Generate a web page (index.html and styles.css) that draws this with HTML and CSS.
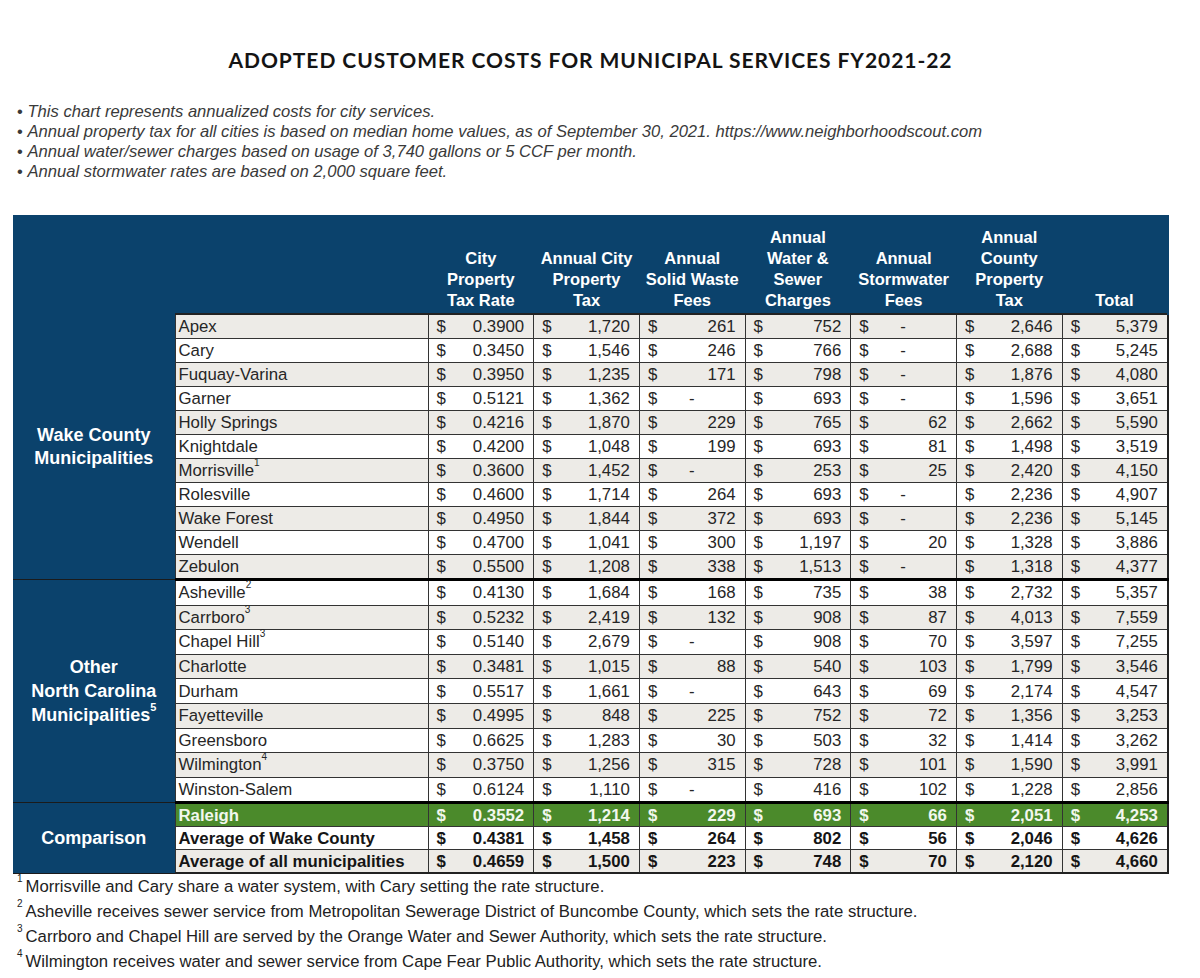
FILE: index.html
```html
<!DOCTYPE html>
<html>
<head>
<meta charset="utf-8">
<title>Adopted Customer Costs for Municipal Services FY2021-22</title>
<link rel="stylesheet" href="styles.css">
</head>
<body>
<div class="page">
  <h1 class="title">ADOPTED CUSTOMER COSTS FOR MUNICIPAL SERVICES FY2021-22</h1>
  <ul class="notes">
    <li>This chart represents annualized costs for city services.</li>
    <li>Annual property tax for all cities is based on median home values, as of September 30, 2021. https://www.neighborhoodscout.com</li>
    <li>Annual water/sewer charges based on usage of 3,740 gallons or 5 CCF per month.</li>
    <li>Annual stormwater rates are based on 2,000 square feet.</li>
  </ul>
  <table class="costs">
    <colgroup><col class="c-group"><col class="c-name"><col class="c-num"><col class="c-num"><col class="c-num"><col class="c-num"><col class="c-num"><col class="c-num"><col class="c-num"></colgroup>
    <thead>
      <tr class="head">
        <th colspan="2"></th>
        <th>City<br>Property<br>Tax Rate</th>
        <th>Annual City<br>Property<br>Tax</th>
        <th>Annual<br>Solid Waste<br>Fees</th>
        <th>Annual<br>Water &amp;<br>Sewer<br>Charges</th>
        <th>Annual<br>Stormwater<br>Fees</th>
        <th>Annual<br>County<br>Property<br>Tax</th>
        <th>Total</th>
      </tr>
    </thead>
    <tbody>
      <tr class="wake alt"><th class="group g-wake" rowspan="11">Wake County<br>Municipalities</th><td class="name">Apex</td><td><div class="m"><span>$</span><span>0.3900</span></div></td><td><div class="m"><span>$</span><span>1,720</span></div></td><td><div class="m"><span>$</span><span>261</span></div></td><td><div class="m"><span>$</span><span>752</span></div></td><td><div class="m"><span>$</span><span class="dash">-</span></div></td><td><div class="m"><span>$</span><span>2,646</span></div></td><td><div class="m"><span>$</span><span>5,379</span></div></td></tr>
      <tr class="wake"><td class="name">Cary</td><td><div class="m"><span>$</span><span>0.3450</span></div></td><td><div class="m"><span>$</span><span>1,546</span></div></td><td><div class="m"><span>$</span><span>246</span></div></td><td><div class="m"><span>$</span><span>766</span></div></td><td><div class="m"><span>$</span><span class="dash">-</span></div></td><td><div class="m"><span>$</span><span>2,688</span></div></td><td><div class="m"><span>$</span><span>5,245</span></div></td></tr>
      <tr class="wake alt"><td class="name">Fuquay-Varina</td><td><div class="m"><span>$</span><span>0.3950</span></div></td><td><div class="m"><span>$</span><span>1,235</span></div></td><td><div class="m"><span>$</span><span>171</span></div></td><td><div class="m"><span>$</span><span>798</span></div></td><td><div class="m"><span>$</span><span class="dash">-</span></div></td><td><div class="m"><span>$</span><span>1,876</span></div></td><td><div class="m"><span>$</span><span>4,080</span></div></td></tr>
      <tr class="wake"><td class="name">Garner</td><td><div class="m"><span>$</span><span>0.5121</span></div></td><td><div class="m"><span>$</span><span>1,362</span></div></td><td><div class="m"><span>$</span><span class="dash">-</span></div></td><td><div class="m"><span>$</span><span>693</span></div></td><td><div class="m"><span>$</span><span class="dash">-</span></div></td><td><div class="m"><span>$</span><span>1,596</span></div></td><td><div class="m"><span>$</span><span>3,651</span></div></td></tr>
      <tr class="wake alt"><td class="name">Holly Springs</td><td><div class="m"><span>$</span><span>0.4216</span></div></td><td><div class="m"><span>$</span><span>1,870</span></div></td><td><div class="m"><span>$</span><span>229</span></div></td><td><div class="m"><span>$</span><span>765</span></div></td><td><div class="m"><span>$</span><span>62</span></div></td><td><div class="m"><span>$</span><span>2,662</span></div></td><td><div class="m"><span>$</span><span>5,590</span></div></td></tr>
      <tr class="wake"><td class="name">Knightdale</td><td><div class="m"><span>$</span><span>0.4200</span></div></td><td><div class="m"><span>$</span><span>1,048</span></div></td><td><div class="m"><span>$</span><span>199</span></div></td><td><div class="m"><span>$</span><span>693</span></div></td><td><div class="m"><span>$</span><span>81</span></div></td><td><div class="m"><span>$</span><span>1,498</span></div></td><td><div class="m"><span>$</span><span>3,519</span></div></td></tr>
      <tr class="wake alt"><td class="name">Morrisville<sup>1</sup></td><td><div class="m"><span>$</span><span>0.3600</span></div></td><td><div class="m"><span>$</span><span>1,452</span></div></td><td><div class="m"><span>$</span><span class="dash">-</span></div></td><td><div class="m"><span>$</span><span>253</span></div></td><td><div class="m"><span>$</span><span>25</span></div></td><td><div class="m"><span>$</span><span>2,420</span></div></td><td><div class="m"><span>$</span><span>4,150</span></div></td></tr>
      <tr class="wake"><td class="name">Rolesville</td><td><div class="m"><span>$</span><span>0.4600</span></div></td><td><div class="m"><span>$</span><span>1,714</span></div></td><td><div class="m"><span>$</span><span>264</span></div></td><td><div class="m"><span>$</span><span>693</span></div></td><td><div class="m"><span>$</span><span class="dash">-</span></div></td><td><div class="m"><span>$</span><span>2,236</span></div></td><td><div class="m"><span>$</span><span>4,907</span></div></td></tr>
      <tr class="wake alt"><td class="name">Wake Forest</td><td><div class="m"><span>$</span><span>0.4950</span></div></td><td><div class="m"><span>$</span><span>1,844</span></div></td><td><div class="m"><span>$</span><span>372</span></div></td><td><div class="m"><span>$</span><span>693</span></div></td><td><div class="m"><span>$</span><span class="dash">-</span></div></td><td><div class="m"><span>$</span><span>2,236</span></div></td><td><div class="m"><span>$</span><span>5,145</span></div></td></tr>
      <tr class="wake"><td class="name">Wendell</td><td><div class="m"><span>$</span><span>0.4700</span></div></td><td><div class="m"><span>$</span><span>1,041</span></div></td><td><div class="m"><span>$</span><span>300</span></div></td><td><div class="m"><span>$</span><span>1,197</span></div></td><td><div class="m"><span>$</span><span>20</span></div></td><td><div class="m"><span>$</span><span>1,328</span></div></td><td><div class="m"><span>$</span><span>3,886</span></div></td></tr>
      <tr class="wake alt last"><td class="name">Zebulon</td><td><div class="m"><span>$</span><span>0.5500</span></div></td><td><div class="m"><span>$</span><span>1,208</span></div></td><td><div class="m"><span>$</span><span>338</span></div></td><td><div class="m"><span>$</span><span>1,513</span></div></td><td><div class="m"><span>$</span><span class="dash">-</span></div></td><td><div class="m"><span>$</span><span>1,318</span></div></td><td><div class="m"><span>$</span><span>4,377</span></div></td></tr>

      <tr class="other"><th class="group g-other" rowspan="9">Other<br>North Carolina<br>Municipalities<sup>5</sup></th><td class="name">Asheville<sup>2</sup></td><td><div class="m"><span>$</span><span>0.4130</span></div></td><td><div class="m"><span>$</span><span>1,684</span></div></td><td><div class="m"><span>$</span><span>168</span></div></td><td><div class="m"><span>$</span><span>735</span></div></td><td><div class="m"><span>$</span><span>38</span></div></td><td><div class="m"><span>$</span><span>2,732</span></div></td><td><div class="m"><span>$</span><span>5,357</span></div></td></tr>
      <tr class="other alt"><td class="name">Carrboro<sup>3</sup></td><td><div class="m"><span>$</span><span>0.5232</span></div></td><td><div class="m"><span>$</span><span>2,419</span></div></td><td><div class="m"><span>$</span><span>132</span></div></td><td><div class="m"><span>$</span><span>908</span></div></td><td><div class="m"><span>$</span><span>87</span></div></td><td><div class="m"><span>$</span><span>4,013</span></div></td><td><div class="m"><span>$</span><span>7,559</span></div></td></tr>
      <tr class="other"><td class="name">Chapel Hill<sup>3</sup></td><td><div class="m"><span>$</span><span>0.5140</span></div></td><td><div class="m"><span>$</span><span>2,679</span></div></td><td><div class="m"><span>$</span><span class="dash">-</span></div></td><td><div class="m"><span>$</span><span>908</span></div></td><td><div class="m"><span>$</span><span>70</span></div></td><td><div class="m"><span>$</span><span>3,597</span></div></td><td><div class="m"><span>$</span><span>7,255</span></div></td></tr>
      <tr class="other alt"><td class="name">Charlotte</td><td><div class="m"><span>$</span><span>0.3481</span></div></td><td><div class="m"><span>$</span><span>1,015</span></div></td><td><div class="m"><span>$</span><span>88</span></div></td><td><div class="m"><span>$</span><span>540</span></div></td><td><div class="m"><span>$</span><span>103</span></div></td><td><div class="m"><span>$</span><span>1,799</span></div></td><td><div class="m"><span>$</span><span>3,546</span></div></td></tr>
      <tr class="other"><td class="name">Durham</td><td><div class="m"><span>$</span><span>0.5517</span></div></td><td><div class="m"><span>$</span><span>1,661</span></div></td><td><div class="m"><span>$</span><span class="dash">-</span></div></td><td><div class="m"><span>$</span><span>643</span></div></td><td><div class="m"><span>$</span><span>69</span></div></td><td><div class="m"><span>$</span><span>2,174</span></div></td><td><div class="m"><span>$</span><span>4,547</span></div></td></tr>
      <tr class="other alt"><td class="name">Fayetteville</td><td><div class="m"><span>$</span><span>0.4995</span></div></td><td><div class="m"><span>$</span><span>848</span></div></td><td><div class="m"><span>$</span><span>225</span></div></td><td><div class="m"><span>$</span><span>752</span></div></td><td><div class="m"><span>$</span><span>72</span></div></td><td><div class="m"><span>$</span><span>1,356</span></div></td><td><div class="m"><span>$</span><span>3,253</span></div></td></tr>
      <tr class="other"><td class="name">Greensboro</td><td><div class="m"><span>$</span><span>0.6625</span></div></td><td><div class="m"><span>$</span><span>1,283</span></div></td><td><div class="m"><span>$</span><span>30</span></div></td><td><div class="m"><span>$</span><span>503</span></div></td><td><div class="m"><span>$</span><span>32</span></div></td><td><div class="m"><span>$</span><span>1,414</span></div></td><td><div class="m"><span>$</span><span>3,262</span></div></td></tr>
      <tr class="other alt"><td class="name">Wilmington<sup>4</sup></td><td><div class="m"><span>$</span><span>0.3750</span></div></td><td><div class="m"><span>$</span><span>1,256</span></div></td><td><div class="m"><span>$</span><span>315</span></div></td><td><div class="m"><span>$</span><span>728</span></div></td><td><div class="m"><span>$</span><span>101</span></div></td><td><div class="m"><span>$</span><span>1,590</span></div></td><td><div class="m"><span>$</span><span>3,991</span></div></td></tr>
      <tr class="other last"><td class="name">Winston-Salem</td><td><div class="m"><span>$</span><span>0.6124</span></div></td><td><div class="m"><span>$</span><span>1,110</span></div></td><td><div class="m"><span>$</span><span class="dash">-</span></div></td><td><div class="m"><span>$</span><span>416</span></div></td><td><div class="m"><span>$</span><span>102</span></div></td><td><div class="m"><span>$</span><span>1,228</span></div></td><td><div class="m"><span>$</span><span>2,856</span></div></td></tr>

      <tr class="comp raleigh"><th class="group g-comp" rowspan="3">Comparison</th><td class="name">Raleigh</td><td><div class="m"><span>$</span><span>0.3552</span></div></td><td><div class="m"><span>$</span><span>1,214</span></div></td><td><div class="m"><span>$</span><span>229</span></div></td><td><div class="m"><span>$</span><span>693</span></div></td><td><div class="m"><span>$</span><span>66</span></div></td><td><div class="m"><span>$</span><span>2,051</span></div></td><td><div class="m"><span>$</span><span>4,253</span></div></td></tr>
      <tr class="comp"><td class="name">Average of Wake County</td><td><div class="m"><span>$</span><span>0.4381</span></div></td><td><div class="m"><span>$</span><span>1,458</span></div></td><td><div class="m"><span>$</span><span>264</span></div></td><td><div class="m"><span>$</span><span>802</span></div></td><td><div class="m"><span>$</span><span>56</span></div></td><td><div class="m"><span>$</span><span>2,046</span></div></td><td><div class="m"><span>$</span><span>4,626</span></div></td></tr>
      <tr class="comp alt"><td class="name">Average of all municipalities</td><td><div class="m"><span>$</span><span>0.4659</span></div></td><td><div class="m"><span>$</span><span>1,500</span></div></td><td><div class="m"><span>$</span><span>223</span></div></td><td><div class="m"><span>$</span><span>748</span></div></td><td><div class="m"><span>$</span><span>70</span></div></td><td><div class="m"><span>$</span><span>2,120</span></div></td><td><div class="m"><span>$</span><span>4,660</span></div></td></tr>
    </tbody>
  </table>
  <ol class="footnotes">
    <li><sup>1</sup>Morrisville and Cary share a water system, with Cary setting the rate structure.</li>
    <li><sup>2</sup>Asheville receives sewer service from Metropolitan Sewerage District of Buncombe County, which sets the rate structure.</li>
    <li><sup>3</sup>Carrboro and Chapel Hill are served by the Orange Water and Sewer Authority, which sets the rate structure.</li>
    <li><sup>4</sup>Wilmington receives water and sewer service from Cape Fear Public Authority, which sets the rate structure.</li>
  </ol>
</div>
</body>
</html>
```

FILE: styles.css
```css
html, body {
  margin: 0;
  padding: 0;
  background: #ffffff;
}
body {
  font-family: "Liberation Sans", Arial, sans-serif;
  color: #222;
}
.page {
  width: 1155px;
  margin-left: 13px;
  padding-top: 44px;
}
.title {
  margin: 0;
  text-align: center;
  font-family: Lato, "Liberation Sans", sans-serif;
  font-weight: 700;
  font-size: 21px;
  line-height: 32px;
  letter-spacing: 0.95px;
  color: #141414;
}
.notes {
  list-style: none;
  margin: 26px 0 0 4px;
  padding: 0;
  font-style: italic;
  font-size: 16.6px;
  line-height: 20px;
  color: #3a3a3a;
}
.notes li::before {
  content: "\2022  ";
  font-style: normal;
  white-space: pre;
}
.costs {
  margin-top: 33px;
  width: 1155px;
  table-layout: fixed;
  border-collapse: collapse;
  font-size: 16.8px;
  color: #262626;
}
.c-group { width: 162px; }
.c-name { width: 253px; }
.c-num { width: 105.7px; }

.head th {
  background: #0b426c;
  color: #ffffff;
  font-weight: 700;
  font-size: 16.5px;
  line-height: 21px;
  vertical-align: bottom;
  text-align: center;
  padding: 0 0 2px;
  height: 99px;
  box-sizing: border-box;
}
.head th:last-child { border-right: 2px solid #0b426c; }

.group {
  background: #0b426c;
  color: #ffffff;
  font-weight: 700;
  font-size: 18px;
  text-align: center;
  vertical-align: middle;
  border-bottom: 1px solid #1b1b1b;
  padding: 0;
}
.g-wake { line-height: 23px; }
.g-other { line-height: 24px; }
.group sup {
  font-size: 11px;
  vertical-align: top;
  line-height: 0;
  position: relative;
  top: 4px;
}

tbody td {
  border: 1px solid #333;
  background: #ffffff;
  padding: 0;
  line-height: 19px;
  white-space: nowrap;
}
tbody tr.alt td { background: #edebe7; }
tbody tr.wake td { height: 23px; }
tbody tr.other td { height: 23.6px; }
tbody tr.comp td { height: 22px; }
tbody tr:first-child td { border-top: 2px solid #222; }
tbody tr.last td { border-bottom: 3px solid #000; }

td.name {
  padding-left: 3px;
}
td.name sup {
  font-size: 10px;
  line-height: 0;
  vertical-align: top;
  position: relative;
  top: 2px;
}
.m {
  display: flex;
  justify-content: space-between;
  padding: 0 9px 0 8px;
}
.m .dash { padding-right: 41px; }

tr.raleigh td {
  background: #4b8a2b;
  color: #f2f7ee;
  font-weight: 700;
}
tr.comp td { font-weight: 700; color: #151515; }
tr.comp.raleigh td { color: #f2f7ee; }
tbody td:last-child { border-right: 2px solid #222; }
tbody tr.comp:last-child td { border-bottom: 2px solid #222; }

.footnotes {
  list-style: none;
  margin: 0 0 0 4px;
  padding: 0;
  font-size: 16.7px;
  line-height: 25px;
  color: #222;
}
.footnotes sup {
  font-size: 10px;
  line-height: 0;
  vertical-align: top;
  position: relative;
  top: 5px;
  margin-right: 3px;
}
```
